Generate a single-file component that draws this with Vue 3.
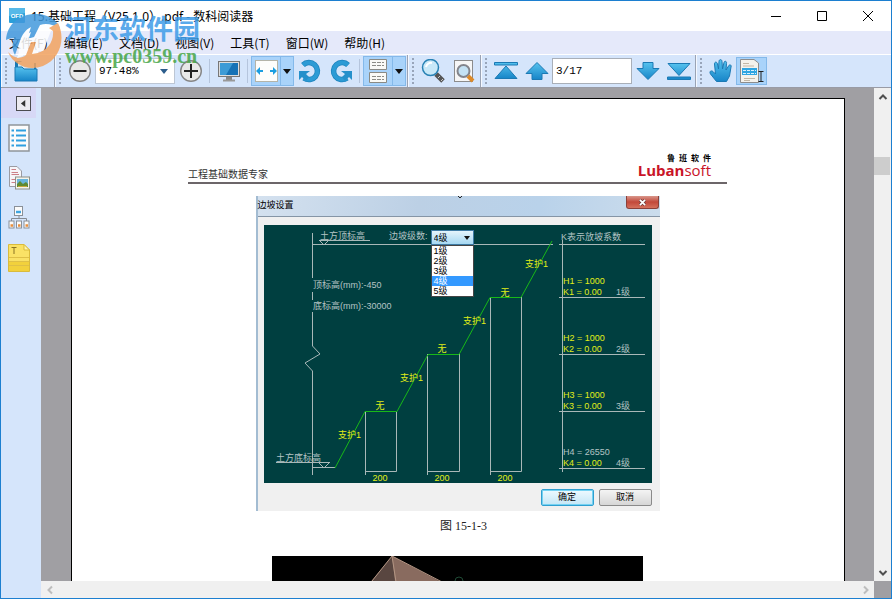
<template>
  <div class="window">
    <!-- 標題列 -->
    <header class="title-bar">
      <svg class="app-icon" viewBox="0 0 16 16">
        <rect width="16" height="15" rx="1" fill="#2b9fd9" />
        <path d="M0 0H16V5L0 8Z" fill="#56b9e8" />
        <text x="8" y="10" text-anchor="middle" class="app-icon-text">OFD</text>
      </svg>
      <h1 class="title">15.基础工程（V25.1.0）.pdf - 数科阅读器</h1>
      <button class="win-btn" aria-label="最小化">
        <svg viewBox="0 0 12 12"><path d="M1 6.5H11" /></svg>
      </button>
      <button class="win-btn" aria-label="最大化">
        <svg viewBox="0 0 12 12"><path d="M1.5 1.5H10.5V10.5H1.5Z" /></svg>
      </button>
      <button class="win-btn" aria-label="关闭">
        <svg viewBox="0 0 12 12"><path d="M1 1L11 11M11 1L1 11" /></svg>
      </button>
    </header>

    <!-- 選單 -->
    <nav class="menu-bar">
      <button v-for="m in menus" :key="m">{{ m }}</button>
    </nav>

    <!-- 工具列 -->
    <div class="toolbar">
      <div class="group group-file">
        <i class="handle"></i>
        <button class="tool" aria-label="打开">
          <svg viewBox="0 0 24 24">
            <defs>
              <linearGradient id="blue" x1="0" y1="0" x2="0" y2="1">
                <stop offset="0" stop-color="#56c2ee" />
                <stop offset="1" stop-color="#1785c8" />
              </linearGradient>
            </defs>
            <path d="M1 2H7L9 4H22V22H1Z" fill="#1779b5" />
            <path d="M4 3H20V10H4Z" fill="#cfe6f4" />
            <path d="M1 8H8L10 10H23V22H1Z" fill="url(#blue)" stroke="#1b79b4" />
          </svg>
        </button>
      </div>

      <div class="group">
        <i class="handle"></i>
        <button class="tool" aria-label="缩小">
          <svg viewBox="0 0 24 24">
            <circle cx="12" cy="12" r="10.3" fill="#e8e8e8" stroke="#858585" stroke-width="1.4" />
            <path d="M5.5 12H18.5" stroke="#222" stroke-width="2" />
          </svg>
        </button>
        <label class="zoom-box">
          <select aria-label="缩放"><option>97.48%</option></select>
          <svg viewBox="0 0 8 5"><path d="M0 0H8L4 5Z" fill="#2c5d8c" /></svg>
        </label>
        <button class="tool" aria-label="放大">
          <svg viewBox="0 0 24 24">
            <circle cx="12" cy="12" r="10.3" fill="#e8e8e8" stroke="#858585" stroke-width="1.4" />
            <path d="M5 12H19M12 5V19" stroke="#222" stroke-width="2" />
          </svg>
        </button>
        <i class="sep"></i>
        <button class="tool" aria-label="全屏">
          <svg viewBox="0 0 24 24">
            <rect x="1.5" y="2.5" width="21" height="15" fill="#ddd" stroke="#777" />
            <rect x="3" y="4" width="18" height="12" fill="#1672b6" />
            <path d="M3 4H16L9 16H3Z" fill="#3d9bd6" />
            <path d="M9 18H15V21H9Z" fill="#888" />
            <path d="M6 21.5H18" stroke="#999" stroke-width="2" />
          </svg>
        </button>
        <i class="sep"></i>
        <div class="split">
          <button class="tool" aria-label="适合宽度">
            <svg viewBox="0 0 24 24">
              <rect x="1.5" y="1.5" width="22" height="21" fill="#fdfdfb" stroke="#b4b4a8" />
              <path d="M2 12L6 8V11H9V13H6V16ZM23 12L19 8V11H16V13H19V16Z" fill="#1b9ee0" />
            </svg>
          </button>
          <button class="drop" aria-label="更多适合选项">
            <svg viewBox="0 0 8 5"><path d="M0 0H8L4 5Z" fill="#111" /></svg>
          </button>
        </div>
        <button class="tool" aria-label="向左旋转">
          <svg viewBox="0 0 24 24">
            <path d="M5 6A8.5 8.5 0 1 1 6 19" fill="none" stroke="#1d83bd" stroke-width="5.5" />
            <path d="M5 6A8.5 8.5 0 1 1 6 19" fill="none" stroke="#2c9bd5" stroke-width="4" />
            <path d="M12 12H1V21L4 18L8 22L11 18L8 15Z" fill="#2590cb" />
          </svg>
        </button>
        <button class="tool" aria-label="向右旋转">
          <svg viewBox="0 0 24 24">
            <path d="M19 6A8.5 8.5 0 1 0 18 19" fill="none" stroke="#1d83bd" stroke-width="5.5" />
            <path d="M19 6A8.5 8.5 0 1 0 18 19" fill="none" stroke="#2c9bd5" stroke-width="4" />
            <path d="M12 12H23V21L20 18L16 22L13 18L16 15Z" fill="#2590cb" />
          </svg>
        </button>
        <i class="sep"></i>
        <div class="split">
          <button class="tool" aria-label="页面布局">
            <svg viewBox="0 0 24 24">
              <path d="M3.5 .5V10.5H20.5V.5ZM3.5 23.5V13.5H20.5V23.5Z" fill="#fafaf6" stroke="#8a8a84" />
              <path d="M6 3.5H18M6 6.5H18M6 17.5H18M6 20.5H18" stroke="#8c8c86" stroke-dasharray="4 1" />
            </svg>
          </button>
          <button class="drop" aria-label="更多布局选项">
            <svg viewBox="0 0 8 5"><path d="M0 0H8L4 5Z" fill="#111" /></svg>
          </button>
        </div>
      </div>

      <div class="group">
        <i class="handle"></i>
        <button class="tool" aria-label="放大镜">
          <svg viewBox="0 0 24 24">
            <path d="M15 15L22 22" stroke="#555" stroke-width="5" />
            <path d="M17 19L19 17M20 22L22 20" stroke="#ccc" />
            <circle cx="9.5" cy="8.5" r="8" fill="#c8e8f8" stroke="#2882b4" stroke-width="1.5" />
            <path d="M5 8A5 5 0 0 1 11 4" fill="none" stroke="#fff" stroke-width="2" />
          </svg>
        </button>
        <button class="tool" aria-label="查找">
          <svg viewBox="0 0 24 24">
            <rect x="2.5" y="1.5" width="18" height="21" fill="#f6f6f6" stroke="#8c8c8c" />
            <circle cx="11.5" cy="12" r="6" fill="#c4e2f4" stroke="#83858c" stroke-width="2" />
            <path d="M16 17L21 22" stroke="#dd8a28" stroke-width="4" />
          </svg>
        </button>
      </div>

      <div class="group">
        <i class="handle"></i>
        <button class="tool" aria-label="首页">
          <svg viewBox="0 0 24 24">
            <path d="M.5 3.5H23.5V6H.5ZM12 7L23 19.5H1Z" fill="url(#blue)" stroke="#1b79b4" />
          </svg>
        </button>
        <button class="tool" aria-label="上一页">
          <svg viewBox="0 0 24 24">
            <path d="M12 3.5L23 14.5H17V20.5H7V14.5H1Z" fill="url(#blue)" stroke="#1b79b4" />
          </svg>
        </button>
        <input v-model="page" class="page-input" type="text" aria-label="页码" />
        <button class="tool" aria-label="下一页">
          <svg viewBox="0 0 24 24">
            <path d="M12 20.5L23 9.5H17V3.5H7V9.5H1Z" fill="url(#blue)" stroke="#1b79b4" />
          </svg>
        </button>
        <button class="tool" aria-label="末页">
          <svg viewBox="0 0 24 24">
            <path d="M.5 18H23.5V20.5H.5ZM12 16.5L23 4.5H1Z" fill="url(#blue)" stroke="#1b79b4" />
          </svg>
        </button>
      </div>

      <div class="group group-last">
        <i class="handle"></i>
        <button class="tool" aria-label="手型工具">
          <svg viewBox="0 0 24 24">
            <path
              d="M7.5 22.5L1.5 15C0 12.5 2 11 4 12.5L6.5 15L5.5 5C5.5 2.5 8 2.5 8.5 5L9.5 10L10 2.5C10 0 13 0 13 2.5L13.5 10L15 3.5C15.5 1.5 18 2 17.5 4.5L17 11L19.5 7C20.5 5 23 6 22 8L20.5 17L17.5 22.5Z"
              fill="url(#blue)"
              stroke="#1b79b4"
            />
          </svg>
        </button>
        <button class="tool active" aria-label="选择文本">
          <svg viewBox="0 0 24 24">
            <path d="M.5 .5H14L18.5 4V23.5H.5Z" fill="#f4f2ec" stroke="#8d8d8d" />
            <path d="M3 4.5H9M3 7H14M4 19.5H15M4 21.5H10" stroke="#c2b7a6" />
            <path d="M2 9H17V16H2Z" fill="#2fa5e2" />
            <path d="M3 11.5H16M3 14.5H16" stroke="#d8f0fc" stroke-dasharray="3 1" />
            <path d="M18.5 12.5H23.5M21 12.5V22.5M18.5 22.5H23.5" stroke="#222" fill="none" />
          </svg>
        </button>
      </div>
    </div>

    <div class="body">
      <!-- 側邊欄 -->
      <aside class="sidebar">
        <div class="side-head">
          <button class="collapse" aria-label="收起">
            <svg viewBox="0 0 8 8"><path d="M6 0V8L1 4Z" fill="#333" /></svg>
          </button>
        </div>
        <button class="side-btn" aria-label="大纲">
          <svg viewBox="0 0 22 28">
            <rect x="1" y="1" width="20" height="26" fill="#fbfbfb" stroke="#8f959b" stroke-width="1.5" />
            <path d="M8 6.5H18M8 11.5H18M8 16.5H18M8 21.5H18M3.5 6.5H6M3.5 11.5H6M3.5 16.5H6M3.5 21.5H6" stroke="#2f9fe0" stroke-width="2" />
          </svg>
        </button>
        <button class="side-btn" aria-label="缩略图">
          <svg viewBox="0 0 22 28">
            <path d="M1.5 2.5H9L13.5 7V22.5H1.5Z" fill="#f6f6fa" stroke="#9b9ba2" />
            <path d="M3.5 5.5H8M3.5 8.5H10M3.5 10.5H11M3.5 15.5H8M3.5 18.5H7" stroke="#cc8088" />
            <rect x="7.5" y="13" width="14" height="12" fill="#f4f4ec" stroke="#8d9088" />
            <rect x="9" y="15" width="11" height="8" fill="#68b5dc" />
            <path d="M9 20L12 17L15 20L18 18L20 20V23H9Z" fill="#5f8a32" />
            <path d="M10 22.5H19" stroke="#c9a83c" />
          </svg>
        </button>
        <button class="side-btn" aria-label="结构">
          <svg viewBox="0 0 22 28">
            <path d="M11 11V14M3.5 17V14.5H18.5V17" fill="none" stroke="#858b92" />
            <rect x="6.5" y="2.5" width="8" height="9" fill="#fbfbfb" stroke="#8a9098" />
            <path d="M8 8H13" stroke="#3fa5e0" stroke-width="2.5" />
            <g fill="#fbfbfb" stroke="#8a9098">
              <rect x="1" y="17" width="5" height="7" />
              <rect x="8.5" y="17" width="5" height="7" />
              <rect x="16" y="17" width="5" height="7" />
            </g>
            <path d="M2.5 21.5H5M10 21.5H12.5M17.5 21.5H20" stroke="#e98e3c" stroke-width="2.5" />
          </svg>
        </button>
        <button class="side-btn" aria-label="注释">
          <svg viewBox="0 0 22 28">
            <path d="M.5 .5H16L21.5 6V27.5H.5Z" fill="#fae266" stroke="#d9bb3c" />
            <path d="M1 17H21V27H1Z" fill="#f2d13c" />
            <path d="M16 .5V6H21.5Z" fill="#fff4b0" stroke="#d9bb3c" />
            <path d="M1 13.5H21M1 17.5H21M1 21.5H21" stroke="#dfc047" />
            <path d="M3.5 3.5H8.5M6 3.5V10" stroke="#8a7424" fill="none" />
          </svg>
        </button>
      </aside>

      <!-- 文件區 -->
      <main class="viewport">
        <article class="page">
          <div class="page-head">
            <p>工程基础数据专家</p>
            <div class="luban">
              <div class="luban-cn"><span>鲁</span><span>班</span><span>软</span><span>件</span></div>
              <div class="luban-en"><b>Luban</b>soft</div>
            </div>
          </div>

          <section class="dialog">
            <header class="dialog-title">
              <h2>边坡设置</h2>
              <svg class="mark" viewBox="0 0 6 4"><path d="M1 0L3 2L5 0" /></svg>
              <button aria-label="关闭对话框">
                <svg viewBox="0 0 8 8"><path d="M1 1L7 7M7 1L1 7" stroke="#6d3a38" stroke-width="3.5" /><path d="M1 1L7 7M7 1L1 7" stroke="#fff" stroke-width="2" /></svg>
              </button>
            </header>
            <div class="dialog-body">
              <div class="canvas">
                <svg class="drawing" viewBox="0 0 388 258">
                  <!-- 標高線 -->
                  <g class="line">
                    <path d="M48.5 8V53M48.5 67V75M48.5 87V121L56 129L41 138L48.5 146V250" />
                    <path d="M49 19.5H289M55 15.5H106M56 16L60 20L64 16" />
                    <path d="M12 237.5H66M49 242.5H71M55 238L60 243L65 238" />
                    <path d="M298.5 15V247M295 19.5H381" />
                    <path v-for="r in levels" :key="r.n" :d="`M295 ${r.y}.5H381`" />
                    <path d="M101.5 186V250M101 246.5H132.5V186" />
                    <path d="M163.5 129V250M163 246.5H195.5V129" />
                    <path d="M226.5 72V250M226 246.5H257.5V72" />
                  </g>
                  <!-- 邊坡 -->
                  <path class="slope" d="M71 243L101 186.5H133L164 129.5H195L226 72.5H257L288 16" />
                  <g class="grey">
                    <text x="56" y="14">土方顶标高</text>
                    <text x="125" y="14">边坡级数:</text>
                    <text x="297" y="15">K表示放坡系数</text>
                    <text x="49" y="63">顶标高(mm):-450</text>
                    <text x="49" y="84">底标高(mm):-30000</text>
                    <text x="12" y="236">土方底标高</text>
                    <text v-for="r in levels" :key="r.n" x="352" :y="r.y - 2">{{ r.n }}级</text>
                  </g>
                  <g class="yellow">
                    <template v-for="r in levels" :key="r.n">
                      <text x="299" :y="r.y - 13" :class="{ dim: r.n === 4 }">H{{ r.n }} = {{ r.h }}</text>
                      <text x="299" :y="r.y - 2">K{{ r.n }} = 0.00</text>
                    </template>
                    <g v-for="s in steps" :key="s.x">
                      <text :x="s.x" y="256" text-anchor="middle">200</text>
                      <text :x="s.x" :y="s.y" text-anchor="middle">无</text>
                    </g>
                    <text v-for="s in supports" :key="s.x" :x="s.x" :y="s.y">支护1</text>
                  </g>
                </svg>
                <div class="level-pick">
                  <select v-model="level" aria-label="边坡级数">
                    <option v-for="n in 5" :key="n" :value="n">{{ n }}级</option>
                  </select>
                  <svg viewBox="0 0 6 4"><path d="M0 0H6L3 4Z" fill="#111" /></svg>
                  <ul>
                    <li v-for="n in 5" :key="n" :class="{ on: n === level }" @click="level = n">{{ n }}级</li>
                  </ul>
                </div>
              </div>
              <footer class="dialog-foot">
                <button class="primary">确定</button>
                <button>取消</button>
              </footer>
            </div>
          </section>

          <p class="caption">图 15-1-3</p>

          <svg class="model" viewBox="0 0 371 270">
            <rect width="371" height="270" fill="#000" />
            <path d="M120 0L83 45L140 90Z" fill="#594640" />
            <path d="M120 0L123 25L140 90H290Z" fill="#896b5f" />
            <path d="M120 0L100 25M120 0L124 26M120 0L172 27" stroke="#b49684" fill="none" />
            <circle cx="187" cy="25" r="4" fill="none" stroke="#1f4a35" />
          </svg>
        </article>
      </main>

      <div class="scroll-v">
        <button aria-label="向上滚动"><svg viewBox="0 0 10 10"><path d="M1.5 7L5 3.5L8.5 7" /></svg></button>
        <div class="track"><div class="thumb"></div></div>
        <button aria-label="向下滚动"><svg viewBox="0 0 10 10"><path d="M1.5 3L5 6.5L8.5 3" /></svg></button>
      </div>
      <div class="scroll-h">
        <button aria-label="向左滚动"><svg viewBox="0 0 10 10"><path d="M7 1.5L3.5 5L7 8.5" /></svg></button>
        <button aria-label="向右滚动"><svg viewBox="0 0 10 10"><path d="M3 1.5L6.5 5L3 8.5" /></svg></button>
      </div>
    </div>

    <!-- 浮水印 -->
    <div class="watermark">
      <svg viewBox="0 0 58 60">
        <path d="M12 20L42 14L46 22L38 42H28L14 48Z" fill="#fff" />
        <path d="M1 31C2 15 15 4 33 5C45 6 53 12 55 20C48 15 41 14 35 16L29 28L22 30L26 18C20 21 17 26 15 32L10 46C7 41 7 35 9 29C5 29 3 30 1 31Z" fill="#4299dc" />
        <path d="M53 14C61 30 55 50 38 57C24 62 9 57 3 43C9 50 16 50 21 46L26 33H35L32 44C42 42 49 33 48 22L44 19Z" fill="#f3a35f" />
        <path d="M36 18L43 16L37 34L33 44L27 45L31 33H23L18 47L12 49L20 26L26 23L24 29H32Z" fill="#fff" />
      </svg>
      <div class="watermark-text">
        <strong>河东软件园</strong>
        <span>www.pc0359.cn</span>
      </div>
    </div>
  </div>
</template>

<script setup>
import { ref } from 'vue'

const menus = ['文件(F)', '编辑(E)', '文档(D)', '视图(V)', '工具(T)', '窗口(W)', '帮助(H)']
const page = ref('3/17')
const level = ref(4)

const levels = [
  { n: 1, y: 72, h: 1000 },
  { n: 2, y: 129, h: 1000 },
  { n: 3, y: 186, h: 1000 },
  { n: 4, y: 243, h: 26550 },
]
const steps = [
  { x: 116, y: 184 },
  { x: 178, y: 127 },
  { x: 241, y: 71 },
]
const supports = [
  { x: 74, y: 213 },
  { x: 136, y: 156 },
  { x: 199, y: 99 },
  { x: 261, y: 42 },
]
</script>

<style>
body {
  overflow: hidden;
}
</style>

<style scoped>
* {
  box-sizing: border-box;
}

.window {
  position: relative;
  display: flex;
  flex-direction: column;
  height: 100vh;
  border: 1px solid #1c7fd0;
  background: #d5e5fb;
  color: #000;
  font-family: 'Noto Sans CJK SC', sans-serif;
  font-size: 12px;
}

button,
select,
input {
  margin: 0;
  padding: 0;
  border: none;
  background: none;
  color: inherit;
  font: inherit;
}

h1,
h2,
p,
ul {
  margin: 0;
  padding: 0;
  font-weight: normal;
}

svg {
  display: block;
}

/* ─── 標題列 ─── */
.title-bar {
  display: flex;
  align-items: center;
  flex: 0 0 30px;
  background: #fff;
}

.app-icon {
  width: 16px;
  height: 16px;
  margin: 0 6px 0 8px;
}

.app-icon-text {
  font: bold 6px 'Liberation Sans', sans-serif;
  fill: #fff;
}

.title {
  flex: 1;
  font-family: 'Noto Sans', 'Noto Sans CJK SC', sans-serif;
  font-size: 12px;
  white-space: nowrap;
}

.win-btn {
  display: grid;
  place-items: center;
  width: 46px;
  height: 30px;
}

.win-btn svg {
  width: 12px;
  height: 12px;
  fill: none;
  stroke: #000;
}

/* ─── 選單 ─── */
.menu-bar {
  display: flex;
  flex: 0 0 24px;
  background: #e5e9fa;
  border-bottom: 1px solid #fff;
}

.menu-bar button {
  padding: 0 8px;
  line-height: 20px;
  white-space: nowrap;
}

/* ─── 工具列 ─── */
.toolbar {
  display: flex;
  flex: 0 0 33px;
  border-bottom: 1px solid #999ba5;
  background: #d5e5fb;
}

.group {
  display: flex;
  align-items: center;
  padding: 0 1px 0 4px;
  border-right: 1px solid #9aa3b4;
  box-shadow: inset 1px 0 #f4f8ff;
}

.group-file {
  padding-right: 13px;
}

.group-last {
  border-right: none;
}

.handle {
  width: 5px;
  height: 26px;
  background: radial-gradient(circle at 1px 1px, #98a5ba 1px, transparent 1px) 0 0 / 4px 4px repeat-y;
}

.sep {
  width: 1px;
  height: 24px;
  margin: 0 3px;
  background: #b5c5dd;
}

.tool {
  display: grid;
  place-items: center;
  width: 31px;
  height: 28px;
}

.tool svg {
  width: 24px;
  height: 24px;
}

.split {
  display: flex;
  border: 1px solid #84b9ea;
  background: #a9d3fa;
}

.split .tool {
  width: 28px;
}

.drop {
  display: grid;
  place-items: center;
  width: 13px;
  border-left: 1px solid #84b9ea;
}

.drop svg {
  width: 8px;
  height: 5px;
}

.active {
  border: 1px solid #84b9ea;
  background: #a9d3fa;
}

.zoom-box {
  display: flex;
  align-items: center;
  width: 80px;
  height: 26px;
  padding: 0 6px 0 3px;
  border: 1px solid #bcc6d4;
  background: #fff;
}

.zoom-box select {
  flex: 1;
  min-width: 0;
  appearance: none;
  font-family: 'Liberation Mono', monospace;
  font-size: 11px;
}

.zoom-box svg {
  width: 8px;
  height: 5px;
}

.page-input {
  width: 80px;
  height: 26px;
  padding: 0 3px;
  border: 1px solid #a9afb8;
  background: #fff;
  font-family: 'Liberation Mono', monospace;
  font-size: 11px;
}

/* ─── 主體 ─── */
.body {
  display: grid;
  flex: 1;
  grid-template-columns: 40px minmax(0, 1fr) 17px;
  grid-template-rows: minmax(0, 1fr) 17px;
  min-height: 0;
  background: #a09fa3;
}

.sidebar {
  display: flex;
  grid-row: 1 / 3;
  flex-direction: column;
  align-items: flex-start;
  gap: 12px;
  background: #d5e5fb;
}

.side-head {
  display: flex;
  align-items: center;
  justify-content: flex-end;
  width: 35px;
  height: 30px;
  margin-bottom: -6px;
  padding-right: 5px;
  background: #d7d8f6;
}

.collapse {
  display: grid;
  place-items: center;
  width: 15px;
  height: 15px;
  border: 1px solid #4b4b50;
  background: #eceaf0;
}

.collapse svg {
  width: 7px;
  height: 7px;
}

.side-btn {
  margin-left: 7px;
}

.side-btn svg {
  width: 22px;
  height: 28px;
}

.viewport {
  overflow: hidden;
  padding: 10px 29px 0 30px;
}

.page {
  display: flex;
  flex-direction: column;
  align-items: center;
  padding: 56px 117px 0 116px;
  border: 1px solid #000;
  background: #fff;
}

.page-head {
  display: flex;
  align-items: flex-end;
  justify-content: space-between;
  width: 100%;
  height: 29px;
  border-bottom: 2px solid #6c6669;
}

.page-head p {
  color: #333;
  font-size: 10px;
  line-height: 16px;
}

.luban {
  display: flex;
  flex-direction: column;
  align-items: flex-end;
  padding: 0 16px 4px 0;
}

.luban-cn {
  display: flex;
  gap: 4px;
  font-size: 8px;
  font-weight: bold;
  line-height: 8px;
}

.luban-en {
  color: #c91428;
  font-family: 'Open Sans', sans-serif;
  font-size: 15px;
  line-height: 16px;
}

/* ─── 對話框 ─── */
.dialog {
  width: 404px;
  margin-top: 12px;
  border-left: 2px solid #a3bcd2;
  background: #f0f0f0;
  font-family: 'Liberation Sans', 'Noto Sans CJK SC', sans-serif;
  font-size: 9px;
}

.dialog-title {
  display: flex;
  align-items: flex-start;
  justify-content: space-between;
  height: 21px;
  border-bottom: 1px solid #8595a6;
  background: linear-gradient(100deg, #d4e1ef, #bcd0e5 40%, #b9d2ea 70%, #cbdcec);
}

.dialog-title h2 {
  font-size: 9px;
  line-height: 18px;
}

.dialog-title button {
  display: grid;
  place-items: center;
  width: 33px;
  height: 13px;
  border: 1px solid #8b4039;
  border-top: none;
  border-radius: 0 0 3px 3px;
  background: linear-gradient(#d9978b, #c2483a 50%, #d5705c);
}

.dialog-title button svg {
  width: 7px;
  height: 7px;
}

.mark {
  width: 6px;
  height: 4px;
  fill: none;
  stroke: #222;
}

.dialog-body {
  padding: 8px 8px 5px 6px;
}

.canvas {
  position: relative;
  background: #003f40;
}

.drawing {
  width: 388px;
  height: 258px;
}

.line {
  fill: none;
  stroke: #a9b8b8;
}

.slope {
  fill: none;
  stroke: #18b818;
}

.drawing text {
  font-size: 9px;
}

.grey text,
.yellow .dim {
  fill: #b4c4c4;
}

.yellow {
  fill: #e0ee18;
}

.level-pick {
  position: absolute;
  top: 5px;
  left: 167px;
  width: 43px;
}

.level-pick select {
  display: block;
  width: 100%;
  height: 15px;
  padding-left: 2px;
  appearance: none;
  border: 1px solid #3e7ba5;
  background: linear-gradient(#e4f4fc, #a6d8f2);
}

.level-pick svg {
  position: absolute;
  top: 6px;
  right: 4px;
  width: 6px;
  height: 4px;
}

.level-pick ul {
  border: 1px solid #444;
  background: #fff;
  list-style: none;
}

.level-pick li {
  padding-left: 2px;
  line-height: 10px;
}

.level-pick .on {
  background: #3399ff;
  color: #fff;
}

.dialog-foot {
  display: flex;
  justify-content: flex-end;
  gap: 5px;
  padding-top: 6px;
}

.dialog-foot button {
  width: 53px;
  height: 17px;
  border: 1px solid #8a8a8a;
  border-radius: 2px;
  background: linear-gradient(#f4f4f4, #d6d6d6);
  line-height: 15px;
}

.dialog-foot .primary {
  border-color: #2f9fd0;
  background: linear-gradient(#eefaff, #c4e6f6);
  box-shadow: inset 0 0 0 1px #74d2f2;
}

.caption {
  margin-top: 6px;
  color: #222;
  font-family: 'Liberation Serif', 'Noto Sans CJK SC', serif;
  font-size: 12px;
  line-height: 18px;
  text-indent: 12px;
}

.model {
  width: 371px;
  height: 270px;
  margin-top: 21px;
}

/* ─── 捲軸 ─── */
.scroll-v,
.scroll-h {
  display: flex;
  justify-content: space-between;
  background: #f0f0f0;
}

.scroll-v {
  flex-direction: column;
}

.scroll-v button,
.scroll-h button {
  display: grid;
  place-items: center;
  width: 17px;
  height: 17px;
}

.scroll-v svg,
.scroll-h svg {
  width: 10px;
  height: 10px;
  fill: none;
  stroke: #505050;
  stroke-width: 2;
}

.scroll-h svg {
  stroke: #bdbdbd;
}

.track {
  flex: 1;
  padding: 52px 1px 0 0;
}

.thumb {
  height: 18px;
  background: #cdcdcd;
}

/* ─── 浮水印 ─── */
.watermark {
  position: absolute;
  top: 8px;
  left: 4px;
  display: flex;
  gap: 2px;
  opacity: 0.85;
  pointer-events: none;
}

.watermark svg {
  width: 58px;
  height: 60px;
}

.watermark-text {
  display: flex;
  flex-direction: column;
  gap: 5px;
  padding-top: 5px;
}

.watermark strong {
  color: #3e9ce8;
  font-size: 27px;
  line-height: 28px;
}

.watermark span {
  color: #48a648;
  font: bold 20px/18px 'Liberation Serif', serif;
}
</style>
